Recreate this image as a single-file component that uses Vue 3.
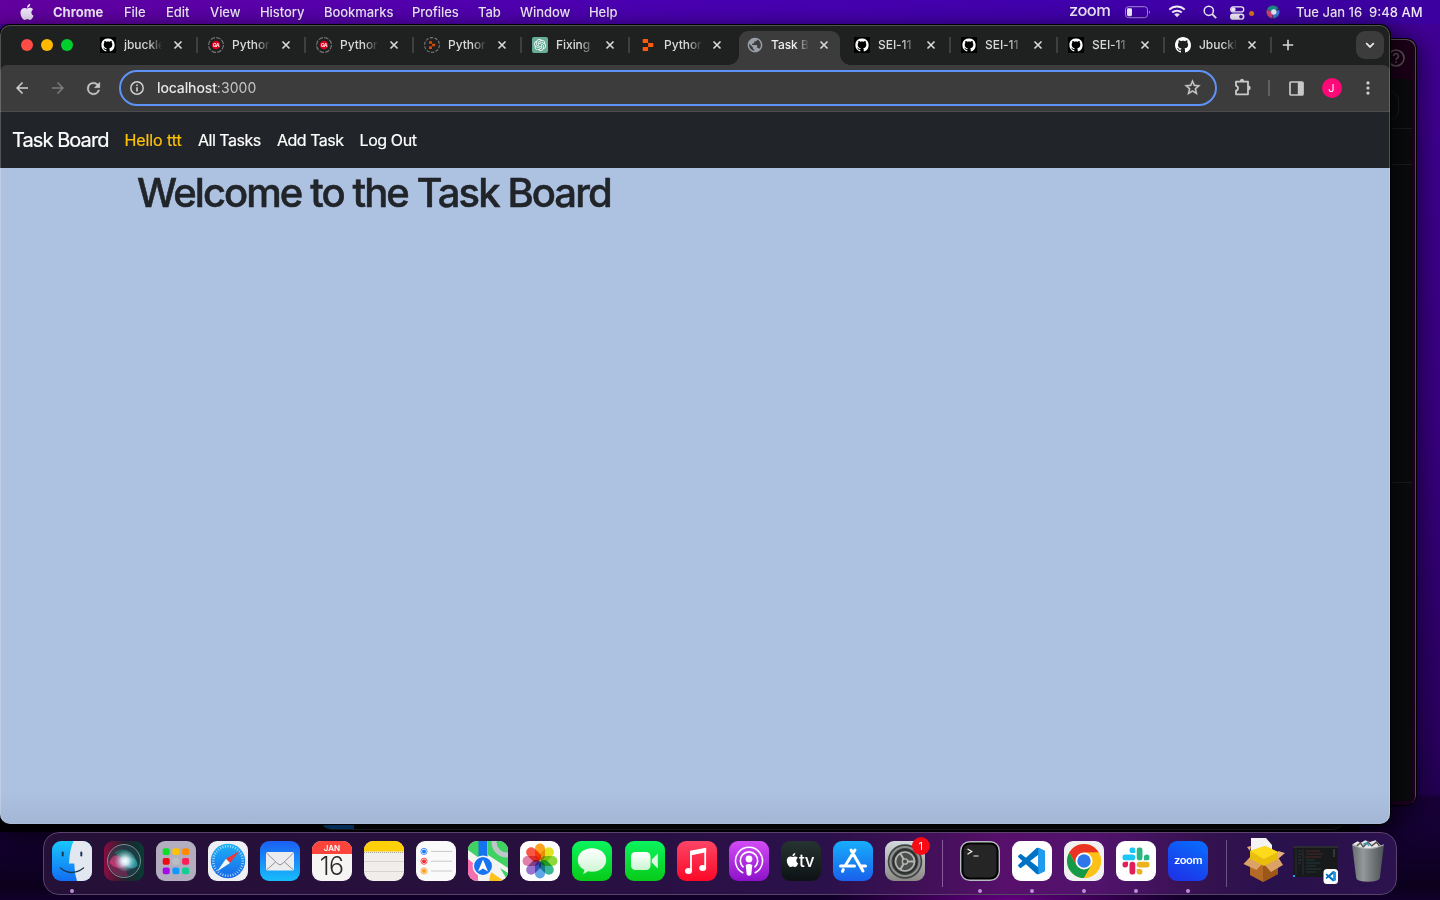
<script setup>
const menus = [
  ['File', 42], ['Edit', 44], ['View', 50], ['History', 64], ['Bookmarks', 88],
  ['Profiles', 66], ['Tab', 42], ['Window', 69], ['Help', 40],
]
const tabs = [
  { icon: 'ghbox', label: 'jbuckle' },
  { icon: 'ga', label: 'Python' },
  { icon: 'ga', label: 'Python' },
  { icon: 'replitring', label: 'Python' },
  { icon: 'gpt', label: 'Fixing' },
  { icon: 'replit', label: 'Python', bare: true },
  { icon: 'globe', label: 'Task B', active: true },
  { icon: 'ghbox', label: 'SEI-11', small: true },
  { icon: 'ghbox', label: 'SEI-11', small: true },
  { icon: 'ghbox', label: 'SEI-11', small: true },
  { icon: 'gh', label: 'Jbuckl', small: true },
]
const links = ['All Tasks', 'Add Task', 'Log Out']
const petals = ['#ff9500', '#dfe000', '#7ed321', '#1fae84', '#4a9be8', '#8a62c8', '#dd6fa0', '#f93e2c']
const pads = ['#0be029', '#ffc400', '#ff8a00', '#f00b12', '#b9bec4', '#ff1d55', '#a70bea', '#1299ff', '#10cf92']
const ticks = Array.from({ length: 36 }, (_, i) => i * 10)
</script>

<template>
  <div class="desktop">
    <svg width="0" height="0" class="defs">
      <symbol id="octocat" viewBox="0 0 16 16"><path d="M8 0C3.58 0 0 3.58 0 8c0 3.54 2.29 6.53 5.47 7.59.4.07.55-.17.55-.38 0-.19-.01-.82-.01-1.49-2.01.37-2.53-.49-2.69-.94-.09-.23-.48-.94-.82-1.13-.28-.15-.68-.52-.01-.53.63-.01 1.08.58 1.23.82.72 1.21 1.87.87 2.33.66.07-.52.28-.87.51-1.07-1.78-.2-3.64-.89-3.64-3.95 0-.87.31-1.59.82-2.15-.08-.2-.36-1.02.08-2.12 0 0 .67-.21 2.2.82.64-.18 1.32-.27 2-.27s1.36.09 2 .27c1.53-1.04 2.2-.82 2.2-.82.44 1.1.16 1.92.08 2.12.51.56.82 1.27.82 2.15 0 3.07-1.87 3.75-3.65 3.95.29.25.54.73.54 1.48 0 1.07-.01 1.93-.01 2.2 0 .21.15.46.55.38A8.01 8.01 0 0 0 16 8c0-4.42-3.58-8-8-8z" /></symbol>
      <symbol id="apple" viewBox="0 0 24 24"><path d="M12.152 6.896c-.948 0-2.415-1.078-3.96-1.04-2.04.027-3.91 1.183-4.961 3.014-2.117 3.675-.546 9.103 1.519 12.09 1.013 1.454 2.208 3.09 3.792 3.039 1.52-.065 2.09-.987 3.935-.987 1.831 0 2.35.987 3.96.948 1.637-.026 2.676-1.48 3.676-2.948 1.156-1.688 1.636-3.325 1.662-3.415-.039-.013-3.182-1.221-3.22-4.857-.026-3.04 2.48-4.494 2.597-4.559-1.429-2.09-3.623-2.324-4.39-2.376-2-.156-3.675 1.09-4.61 1.09zM15.53 3.83c.843-1.012 1.4-2.427 1.245-3.83-1.207.052-2.662.805-3.532 1.818-.78.896-1.454 2.338-1.273 3.714 1.338.104 2.715-.688 3.559-1.701" /></symbol>
      <symbol id="vscode" viewBox="0 0 24 24">
        <path fill="#0072c6" fill-rule="evenodd" d="M23.15 2.587L18.21.21a1.494 1.494 0 0 0-1.705.29l-9.46 8.63-4.12-3.128a.999.999 0 0 0-1.276.057L.327 7.261A1 1 0 0 0 .326 8.74L3.899 12 .326 15.26a1 1 0 0 0 .001 1.479L1.65 17.94a.999.999 0 0 0 1.276.057l4.12-3.128 9.46 8.63a1.492 1.492 0 0 0 1.704.29l4.942-2.377A1.5 1.5 0 0 0 24 20.06V3.939a1.5 1.5 0 0 0-.85-1.352zm-5.146 14.861L10.826 12l7.178-5.448v10.896z" />
        <path fill="#1f9cf0" d="M18 .15l5.15 2.437A1.5 1.5 0 0 1 24 3.94v16.12a1.5 1.5 0 0 1-.85 1.352L18 23.85z" />
      </symbol>
      <symbol id="cross" viewBox="0 0 10 10"><path d="M1.5 1.5l7 7M8.5 1.5l-7 7" fill="none" stroke="#dadada" stroke-width="1.6" /></symbol>
      <symbol id="siri" viewBox="0 0 14 14">
        <circle cx="7" cy="7" r="7" fill="#3b2a70" /><path d="M1 4a7 7 0 0 1 11-1L7 8z" fill="#1c8a8c" />
        <path d="M1 5a6 6 0 0 0 5 8l1-6z" fill="#d8407c" /><path d="M13 5a6 6 0 0 1-6 8V7z" fill="#3f78e0" />
        <circle cx="7.8" cy="7" r="2.7" fill="#f3fbff" opacity=".9" />
      </symbol>
    </svg>

    <header class="menubar">
      <svg class="mb-apple" width="16" height="16" fill="#efe6fa"><use href="#apple" /></svg>
      <b>Chrome</b>
      <span v-for="m in menus" :key="m[0]" :style="{ width: m[1] + 'px' }">{{ m[0] }}</span>
      <span class="mb-zoom">zoom</span>
      <svg class="mb-batt" width="26" height="13" viewBox="0 0 26 13"><rect x=".5" y=".7" width="22" height="11" rx="3" fill="none" stroke="#a58bd8" /><path d="M24 4.5q2 1.7 0 3.4z" fill="#a58bd8" /><rect x="2" y="2.2" width="5" height="8" rx="1.4" fill="#f4effc" /></svg>
      <svg class="mb-wifi" width="18" height="13" viewBox="0 0 18 13" fill="none" stroke="#f4effc" stroke-width="2"><path d="M1.3 4.6a11 11 0 0 1 15.4 0M4.2 7.6a7 7 0 0 1 9.6 0" /><path d="M9 12.3L6.2 9.5a4 4 0 0 1 5.6 0z" fill="#f4effc" stroke="none" /></svg>
      <svg class="mb-search" width="14" height="14" viewBox="0 0 14 14" fill="none" stroke="#f4effc" stroke-width="1.5"><circle cx="5.8" cy="5.8" r="4.6" /><path d="M9.2 9.2l4 4" stroke-width="1.9" /></svg>
      <svg class="mb-cc" width="26" height="14" viewBox="0 0 26 14"><rect x=".7" y=".9" width="13" height="5" rx="2.5" fill="none" stroke="#f4effc" stroke-width="1.3" /><circle cx="3.4" cy="3.4" r="2.2" fill="#f4effc" /><rect y="7.6" width="14.4" height="6.2" rx="3.1" fill="#f4effc" /><circle cx="11" cy="10.7" r="1.8" fill="#4300a4" /><circle cx="21.6" cy="7.6" r="2.5" fill="#db7512" /></svg>
      <svg class="mb-siri" width="14" height="14"><use href="#siri" /></svg>
      <span class="mb-date">Tue Jan 16&nbsp; 9:48 AM</span>
    </header>

    <aside class="backwin">
      <svg width="18" height="18" viewBox="0 0 18 18" class="help"><circle cx="9" cy="9" r="8" fill="none" stroke="#5d525b" stroke-width="1.6" /><path d="M6.6 7a2.4 2.4 0 1 1 3.4 2.2q-1 .5-1 1.8M9 12.2v1.7" fill="none" stroke="#5d525b" stroke-width="1.5" /></svg>
      <div class="pane"><div class="r1"></div><div class="r2"></div><div class="r3"></div></div>
    </aside>
    <div class="editor-edge"><i></i></div>

    <main class="window">
      <div class="tabbar">
        <div class="lights"><i class="red"></i><i class="yellow"></i><i class="green"></i></div>
        <div v-for="(t, i) in tabs" :key="i" class="tab" :class="{ active: t.active, small: t.small, bare: t.bare }">
          <svg class="fav" width="16" height="16" viewBox="0 0 16 16">
            <template v-if="t.icon === 'ghbox'"><rect width="16" height="16" fill="#000" /><use href="#octocat" x="1.2" y="1.2" width="13.6" height="13.6" fill="#fff" /></template>
            <use v-else-if="t.icon === 'gh'" href="#octocat" width="16" height="16" fill="#fff" />
            <template v-else-if="t.icon === 'ga'"><circle cx="8" cy="8" r="7.4" fill="none" stroke="#77797a" stroke-width="1.1" stroke-dasharray="4.6 1.2" /><circle cx="8" cy="8" r="4.3" fill="#d9001c" /><text x="8" y="10" text-anchor="middle" font-size="5" font-weight="800" letter-spacing="-.4" fill="#ffd6da" font-family="Inter, sans-serif">GA</text></template>
            <template v-else-if="t.icon === 'replitring'"><circle cx="8" cy="8" r="7.4" fill="none" stroke="#77797a" stroke-width="1.1" stroke-dasharray="3.2 1.45" /><path d="M5 4.3h3v2.5H5zM8 6.8h3.2v2.5H8zM5 9.3h3v2.6H5z" fill="#d34a08" /></template>
            <template v-else-if="t.icon === 'gpt'"><rect width="16" height="16" rx="2" fill="#68ad98" /><svg x="2" y="2" width="12" height="12" viewBox="0 0 24 24"><path fill="#fff" d="M22.2819 9.8211a5.9847 5.9847 0 0 0-.5157-4.9108 6.0462 6.0462 0 0 0-6.5098-2.9A6.0651 6.0651 0 0 0 4.9807 4.1818a5.9847 5.9847 0 0 0-3.9977 2.9 6.0462 6.0462 0 0 0 .7427 7.0966 5.98 5.98 0 0 0 .511 4.9107 6.051 6.051 0 0 0 6.5146 2.9001A5.9847 5.9847 0 0 0 13.2599 24a6.0557 6.0557 0 0 0 5.7718-4.2058 5.9894 5.9894 0 0 0 3.9977-2.9001 6.0557 6.0557 0 0 0-.7475-7.0729zm-9.022 12.6081a4.4755 4.4755 0 0 1-2.8764-1.0408l.1419-.0804 4.7783-2.7582a.7948.7948 0 0 0 .3927-.6813v-6.7369l2.02 1.1686a.071.071 0 0 1 .038.052v5.5826a4.504 4.504 0 0 1-4.4945 4.4944zm-9.6607-4.1254a4.4708 4.4708 0 0 1-.5346-3.0137l.142.0852 4.783 2.7582a.7712.7712 0 0 0 .7806 0l5.8428-3.3685v2.3324a.0804.0804 0 0 1-.0332.0615L9.74 19.9502a4.4992 4.4992 0 0 1-6.1408-1.6464zM2.3408 7.8956a4.485 4.485 0 0 1 2.3655-1.9728V11.6a.7664.7664 0 0 0 .3879.6765l5.8144 3.3543-2.0201 1.1685a.0757.0757 0 0 1-.071 0l-4.8303-2.7865A4.504 4.504 0 0 1 2.3408 7.872zm16.5963 3.8558L13.1038 8.364 15.1192 7.2a.0757.0757 0 0 1 .071 0l4.8303 2.7913a4.4944 4.4944 0 0 1-.6765 8.1042v-5.6772a.79.79 0 0 0-.407-.667zm2.0107-3.0231l-.142-.0852-4.7735-2.7818a.7759.7759 0 0 0-.7854 0L9.409 9.2297V6.8974a.0662.0662 0 0 1 .0284-.0615l4.8303-2.7866a4.4992 4.4992 0 0 1 6.6802 4.66zM8.3065 12.863l-2.02-1.1638a.0804.0804 0 0 1-.038-.0567V6.0742a4.4992 4.4992 0 0 1 7.3757-3.4537l-.142.0805L8.704 5.459a.7948.7948 0 0 0-.3927.6813zm1.0976-2.3654l2.602-1.4998 2.6069 1.4998v2.9994l-2.5974 1.4997-2.6067-1.4997Z" /></svg></template>
            <path v-else-if="t.icon === 'replit'" d="M3.4 2h4a.7.7 0 0 1 .7.7v3.2H3.4a.7.7 0 0 1-.7-.7V2.7a.7.7 0 0 1 .7-.7zM8.1 5.9h4.5a.7.7 0 0 1 .7.7v2.6a.7.7 0 0 1-.7.7H8.1zM3.4 9.9h4.7v3.3a.7.7 0 0 1-.7.7h-4a.7.7 0 0 1-.7-.7v-2.6a.7.7 0 0 1 .7-.7z" fill="#ff5a0a" />
            <svg v-else x="-.8" y="-.8" width="17.6" height="17.6" viewBox="0 0 24 24"><path fill="#9aa0a9" d="M12 2C6.48 2 2 6.48 2 12s4.48 10 10 10 10-4.48 10-10S17.52 2 12 2zm-1 17.93c-3.95-.49-7-3.85-7-7.93 0-.62.08-1.21.21-1.79L9 15v1c0 1.1.9 2 2 2v1.93zm6.9-2.54c-.26-.81-1-1.39-1.9-1.39h-1v-3c0-.55-.45-1-1-1H8v-2h2c.55 0 1-.45 1-1V7h2c1.1 0 2-.9 2-2v-.41c2.93 1.19 5 4.06 5 7.41 0 2.08-.8 3.97-2.1 5.39z" /></svg>
          </svg>
          <span class="label">{{ t.label }}</span>
          <svg class="x" width="10" height="10"><use href="#cross" /></svg>
        </div>
        <svg class="plus" width="12" height="12" viewBox="0 0 12 12"><path d="M6 .8v10.4M.8 6h10.4" stroke="#d8d8d8" stroke-width="1.6" /></svg>
        <div class="chev"><svg width="10" height="7" viewBox="0 0 10 7"><path d="M1.2 1.2L5 5l3.8-3.8" fill="none" stroke="#e6e6e6" stroke-width="1.8" /></svg></div>
      </div>

      <div class="toolbar">
        <svg width="18" height="18" viewBox="0 0 24 24" fill="#d2d2d2" class="back"><path d="M20 11H7.83l5.59-5.59L12 4l-8 8 8 8 1.41-1.41L7.83 13H20v-2z" /></svg>
        <svg width="18" height="18" viewBox="0 0 24 24" fill="#7c7c7c" class="fwd"><path d="M12 4l-1.41 1.41L16.17 11H4v2h12.17l-5.58 5.59L12 20l8-8z" /></svg>
        <svg width="19" height="19" viewBox="0 0 24 24" fill="#cacaca" class="reload"><path stroke="#cacaca" stroke-width=".5" d="M17.65 6.35A7.958 7.958 0 0 0 12 4a8 8 0 1 0 7.73 10h-2.08A6 6 0 1 1 12 6c1.66 0 3.14.69 4.22 1.78L13 11h7V4l-2.35 2.35z" /></svg>
        <div class="address">
          <svg width="14" height="14" viewBox="0 0 14 14"><circle cx="7" cy="7" r="6.2" fill="none" stroke="#d0d0d0" stroke-width="1.5" /><path d="M7 6.2v4.2M7 3.4v1.6" stroke="#d0d0d0" stroke-width="1.6" /></svg>
          <span class="url">localhost<em>:3000</em></span>
          <svg class="star" width="19" height="19" viewBox="0 0 24 24" fill="#c8c8c8"><path stroke="#c8c8c8" stroke-width=".4" d="M22 9.24l-7.19-.62L12 2 9.19 8.63 2 9.24l5.46 4.73L5.82 21 12 17.27 18.18 21l-1.63-7.03L22 9.24zM12 15.4l-3.76 2.27 1-4.28-3.32-2.88 4.38-.38L12 6.1l1.71 4.04 4.38.38-3.32 2.88 1 4.28L12 15.4z" /></svg>
        </div>
        <svg class="puzzle" width="18" height="18" viewBox="0 0 18 18"><path d="M2 3.6h12v12.7H2v-3.7c2.7-.5 2.7-4.3 0-4.8z" fill="none" stroke="#c9c9c9" stroke-width="1.8" stroke-linejoin="round" /><path d="M5.8 3.3a2.2 2.5 0 0 1 4.4 0zM14.2 7.6a2.4 2.2 0 0 1 0 4.6z" fill="#c9c9c9" /></svg>
        <i class="tdiv"></i>
        <svg class="panel" width="15" height="15" viewBox="0 0 15 15"><rect x="1" y="1" width="13" height="13" rx="1" fill="none" stroke="#c9c9c9" stroke-width="1.7" /><path d="M8.8 1H14v13H8.8z" fill="#c9c9c9" /></svg>
        <span class="avatar">J</span>
        <svg width="4" height="14" viewBox="0 0 4 14" fill="#d2d2d2"><circle cx="2" cy="1.9" r="1.6" /><circle cx="2" cy="7" r="1.6" /><circle cx="2" cy="12.1" r="1.6" /></svg>
      </div>

      <nav class="navbar">
        <span class="brand">Task Board</span>
        <span class="hello">Hello ttt</span>
        <a v-for="l in links" :key="l">{{ l }}</a>
      </nav>
      <section class="page"><h1>Welcome to the Task Board</h1></section>
    </main>

    <footer class="dock">
      <div class="app run">
        <svg width="40" height="40" viewBox="0 0 40 40">
          <defs><linearGradient id="fi" x2="0" y2="1"><stop stop-color="#18c7fc" /><stop offset="1" stop-color="#116ef4" /></linearGradient><clipPath id="rc"><rect width="40" height="40" rx="9" /></clipPath></defs>
          <g clip-path="url(#rc)"><rect width="40" height="40" fill="url(#fi)" /><path d="M21.5 0Q17.5 9 17 22.5h5.3Q22.300 32 25 40h15V0z" fill="#e3e8f0" /></g>
          <path d="M10.700 11.500v3M29.300 11.500v3" stroke="#1c3450" stroke-width="2" stroke-linecap="round" /><path d="M8.500 27q11 9 23 0" fill="none" stroke="#20364f" stroke-width="1.400" stroke-linecap="round" />
        </svg>
      </div>
      <div class="app">
        <svg width="40" height="40" viewBox="0 0 40 40"><defs><linearGradient id="si"><stop stop-color="#8a0c40" /><stop offset=".5" stop-color="#24202e" /><stop offset="1" stop-color="#073c34" /></linearGradient><radialGradient id="glow"><stop stop-color="#fff" /><stop offset=".35" stop-color="#e3f5ff" stop-opacity=".85" /><stop offset="1" stop-color="#8cc8e0" stop-opacity="0" /></radialGradient></defs>
          <rect width="40" height="40" rx="9" fill="url(#si)" /><circle cx="20" cy="20" r="16.500" fill="#244f5a" fill-opacity=".45" stroke="#8f9fa5" stroke-width=".8" /><path d="M4 20a16 16 0 0 0 20 15l-4-14z" fill="#a81f5e" opacity=".45" /><path d="M6 20c3-8 9-7 14-1s-3 10-9 7-6-6-5-6z" fill="#e0407c" opacity=".65" /><path d="M18 20c6-6 14-4 15 2s-8 9-15-2z" fill="#37b6cb" opacity=".65" /><path d="M10 12C20 3 33 12 34 26L22 20z" fill="#1ca884" opacity=".4" /><circle cx="21" cy="20" r="11" fill="url(#glow)" /></svg>
      </div>
      <div class="app">
        <svg width="40" height="40" viewBox="0 0 40 40"><rect width="40" height="40" rx="9" fill="#b3aebf" /><rect v-for="(c, i) in pads" :key="i" :x="6.7 + (i % 3) * 9.7" :y="7.3 + Math.floor(i / 3) * 9.6" width="7" height="6.800" rx="1.800" :fill="c" /></svg>
      </div>
      <div class="app">
        <svg width="40" height="40" viewBox="0 0 40 40"><defs><linearGradient id="sa" x2="0" y2="1"><stop stop-color="#1cb2f8" /><stop offset="1" stop-color="#1768e8" /></linearGradient></defs><rect width="40" height="40" rx="9" fill="#eff0f3" /><circle cx="20" cy="20" r="17.200" fill="url(#sa)" /><path v-for="a in ticks" :key="a" d="M20 4v2.400" stroke="#e7f7ff" stroke-width=".7" :transform="`rotate(${a} 20 20)`" /><path d="M31.500 10L18 17.800l4 4.200z" fill="#f0353a" /><path d="M9 30.500L18 17.800l4 4.200z" fill="#f6f6f6" /></svg>
      </div>
      <div class="app">
        <svg width="40" height="40" viewBox="0 0 40 40"><defs><linearGradient id="ma" x2="0" y2="1"><stop stop-color="#1b5ff3" /><stop offset="1" stop-color="#18bdfc" /></linearGradient></defs><rect width="40" height="40" rx="9" fill="url(#ma)" /><rect x="6" y="11" width="28" height="18.500" rx="1.500" fill="#ececef" /><path d="M6.500 12L18 23q2 1.800 4 0l11.500-11M6.500 29l9-8M33.500 29l-9-8" fill="none" stroke="#8f949c" stroke-width="1" /></svg>
      </div>
      <div class="app">
        <svg width="40" height="40" viewBox="0 0 40 40"><g clip-path="url(#rc)"><rect width="40" height="40" fill="#f7f5f4" /><rect width="40" height="13" fill="#fb453c" /></g><text x="20" y="9.800" text-anchor="middle" font-size="8" font-weight="600" fill="#fff" font-family="Inter, sans-serif">JAN</text><text x="19.500" y="33.500" text-anchor="middle" font-size="25" font-weight="300" letter-spacing="-.6" fill="#29292b" font-family="Inter, sans-serif">16</text></svg>
      </div>
      <div class="app">
        <svg width="40" height="40" viewBox="0 0 40 40"><g clip-path="url(#rc)"><rect width="40" height="40" fill="#f0edea" /><rect width="40" height="10.500" fill="#ffcf08" /><path d="M0 11.500h40" stroke="#aaa59e" stroke-dasharray="1 1" /><path d="M0 20.500h40M0 30.500h40" stroke="#d0ccc7" stroke-width=".8" /></g></svg>
      </div>
      <div class="app">
        <svg width="40" height="40" viewBox="0 0 40 40"><rect width="40" height="40" rx="9" fill="#fbfafb" /><path d="M15 10.400h21M15 20.200h21M15 30h21" stroke="#c9c9cc" stroke-width="1" /><g v-for="(c, i) in ['#1a7af8', '#fb2b2e', '#fb9a1b']" :key="c"><circle cx="8" :cy="10.4 + i * 9.8" r="3.100" fill="none" :stroke="c" stroke-width=".8" /><circle cx="8" :cy="10.4 + i * 9.8" r="2" :fill="c" /></g></svg>
      </div>
      <div class="app">
        <svg width="40" height="40" viewBox="0 0 40 40"><g clip-path="url(#rc)"><rect width="40" height="40" fill="#f3f3f1" /><path d="M0 3l7-3h4v17L0 9z" fill="#3fd161" /><path d="M20 0h20v27L20 14z" fill="#3fd161" /><circle cx="39" cy="1" r="13" fill="none" stroke="#bfc6c9" stroke-width="5" /><path d="M0 18l10 8v14H0z" fill="#f56fae" /><path d="M23 31l13 9H21z" fill="#fcc21b" /><path d="M32 27l8 5v8z" fill="#3fd161" /><path d="M10.500 0h9v20h-9z" fill="#1673ee" /></g><circle cx="15" cy="25" r="9.700" fill="#1673f2" stroke="#f4f4f4" stroke-width="1.500" /><path d="M15 18.500l5 12-5-3-5 3z" fill="#fff" /></svg>
      </div>
      <div class="app">
        <svg width="40" height="40" viewBox="0 0 40 40"><rect width="40" height="40" rx="9" fill="#fff" /><g><rect v-for="(c, i) in petals" :key="c" class="petal" x="15" y="2.500" width="10" height="17" rx="5" :fill="c" opacity=".88" :transform="`rotate(${i * 45} 20 20)`" /></g></svg>
      </div>
      <div class="app">
        <svg width="40" height="40" viewBox="0 0 40 40"><defs><linearGradient id="gr" x2="0" y2="1"><stop stop-color="#0bf45f" /><stop offset="1" stop-color="#08ca18" /></linearGradient><linearGradient id="wh" x2="0" y2="1"><stop stop-color="#fff" /><stop offset="1" stop-color="#caf5d0" /></linearGradient></defs><rect width="40" height="40" rx="9" fill="url(#gr)" /><path d="M20 7.300c8 0 14.200 5 14.200 11.700S28 30.800 20 30.800c-1.500 0-3-.2-4.300-.5-1.500 1.700-3 2.300-4.800 2.400 1-1.200 1.500-2.400 1.400-3.900C8.300 26.700 5.800 23.200 5.800 19c0-6.700 6.200-11.700 14.200-11.700z" fill="url(#wh)" /></svg>
      </div>
      <div class="app">
        <svg width="40" height="40" viewBox="0 0 40 40"><rect width="40" height="40" rx="9" fill="url(#gr)" /><rect x="6" y="11" width="19.500" height="18" rx="4.500" fill="url(#wh)" /><path d="M26.800 18.500l6-6v15l-6-6z" fill="#dff8e3" /></svg>
      </div>
      <div class="app">
        <svg width="40" height="40" viewBox="0 0 40 40"><defs><linearGradient id="mu" x2="0" y2="1"><stop stop-color="#fc4566" /><stop offset="1" stop-color="#fb0926" /></linearGradient></defs><rect width="40" height="40" rx="9" fill="url(#mu)" /><path d="M14 30V10.200M28.200 7v20" fill="none" stroke="#fff" stroke-width="1.800" /><path d="M13.100 9.700L29.100 6.700v4.500L13.100 14.500z" fill="#fff" /><ellipse cx="11.500" cy="30" rx="3.500" ry="3" fill="#fff" /><ellipse cx="25.700" cy="27" rx="3.500" ry="3" fill="#fff" /></svg>
      </div>
      <div class="app">
        <svg width="40" height="40" viewBox="0 0 40 40"><defs><linearGradient id="po" x2="0" y2="1"><stop stop-color="#d34cf6" /><stop offset="1" stop-color="#8c12c8" /></linearGradient></defs><rect width="40" height="40" rx="9" fill="url(#po)" /><g fill="none" stroke="#fff" stroke-width="1.600"><path d="M14.300 32a13.500 13.500 0 1 1 11.400 0" /><path d="M14.500 26.300a8.700 8.700 0 1 1 11 0" /></g><circle cx="20" cy="18" r="3.400" fill="#fff" /><path d="M16.700 24q3.300-2 6.600 0l-1 9.500q-2.300 2.500-4.600 0z" fill="#fff" /></svg>
      </div>
      <div class="app">
        <svg width="40" height="40" viewBox="0 0 40 40"><defs><linearGradient id="tv" x2="0" y2="1"><stop stop-color="#263431" /><stop offset="1" stop-color="#0d1214" /></linearGradient></defs><rect width="40" height="40" rx="9" fill="url(#tv)" /><use href="#apple" x="4.500" y="12" width="14" height="14" fill="#fff" /><text x="18" y="26" font-size="17" font-weight="500" letter-spacing="-.3" fill="#fff" font-family="Inter, sans-serif">tv</text></svg>
      </div>
      <div class="app">
        <svg width="40" height="40" viewBox="0 0 40 40"><defs><linearGradient id="as" x2="0" y2="1"><stop stop-color="#16aefc" /><stop offset="1" stop-color="#1a60eb" /></linearGradient></defs><rect width="40" height="40" rx="9" fill="url(#as)" /><path d="M22 9L12.300 24.500M10.300 28.500l-.8 1.800M18 9l12 21M7.500 25h14M27.500 25h5" fill="none" stroke="#fff" stroke-width="3" stroke-linecap="round" /></svg>
      </div>
      <div class="app">
        <svg width="40" height="40" viewBox="0 0 40 40"><defs><linearGradient id="se" x2="0" y2="1"><stop stop-color="#d2dadd" /><stop offset="1" stop-color="#8b8986" /></linearGradient></defs><rect width="40" height="40" rx="9" fill="url(#se)" /><circle cx="20" cy="20.500" r="17.300" fill="#3f4341" /><circle cx="20" cy="20.500" r="14.500" fill="none" stroke="#8f918f" stroke-width="2.200" /><circle cx="20" cy="20.500" r="11.500" fill="#555957" stroke="#2b2e2c" stroke-width="1.500" /><circle cx="20" cy="20.500" r="9.500" fill="#4c4f4e" stroke="#b3b5b2" stroke-width="1.700" /><path d="M20 20.500h10M20 20.500l-5-8.600M20 20.500l-5 8.600" stroke="#b3b5b2" stroke-width="2" /><circle cx="20" cy="20.500" r="2.700" fill="#464a48" stroke="#b9bbb8" stroke-width="1.300" /></svg>
        <span class="badge">1</span>
      </div>
      <i class="sep"></i>
      <div class="app run">
        <svg width="40" height="40" viewBox="0 0 40 40"><rect x=".7" y=".7" width="38.600" height="38.600" rx="9" fill="#000" stroke="#b4bbc1" stroke-width="1.400" /><rect x="3.500" y="3.500" width="33" height="33" rx="6" fill="#252525" /><path d="M7.500 8l4.300 2.600-4.300 2.600M13.500 15h5" fill="none" stroke="#f2f2f2" stroke-width="1.200" /></svg>
      </div>
      <div class="app run"><svg width="40" height="40" viewBox="0 0 40 40"><rect width="40" height="40" rx="9" fill="#fff" /><use href="#vscode" x="6" y="6.500" width="27" height="27" /></svg></div>
      <div class="app run">
        <svg width="40" height="40" viewBox="0 0 40 40"><rect width="40" height="40" rx="9" fill="#f1f1f3" /><circle cx="20" cy="20" r="17" fill="#fbc116" /><path d="M5.280 11.500A17 17 0 0 1 34.720 11.500L20 12 12.640 24.250z" fill="#ea3323" /><path d="M5.280 11.500L12.640 24.250 20 28.500 27.360 24.250 20 37A17 17 0 0 1 5.280 11.500z" fill="#159a48" /><path d="M34.720 11.500A17 17 0 0 1 20 37l7.360-12.750L20 11.500z" fill="#fbc116" /><circle cx="20" cy="20" r="8.500" fill="#fff" /><circle cx="20" cy="20" r="6.700" fill="#2c78ea" /></svg>
      </div>
      <div class="app run">
        <svg width="40" height="40" viewBox="0 0 40 40"><rect width="40" height="40" rx="9" fill="#fff" /><svg x="6.300" y="6.300" width="27.400" height="27.400" viewBox="0 0 24 24"><g v-for="(c, i) in ['#e01e5a', '#1bc8f5', '#2bb67d', '#ecb21e']" :key="c" :fill="c" :transform="`rotate(${i * 90} 12 12)`"><path d="M5.042 15.165a2.528 2.528 0 0 1-2.52 2.523A2.528 2.528 0 0 1 0 15.165a2.527 2.527 0 0 1 2.522-2.52h2.52v2.52zM6.313 15.165a2.527 2.527 0 0 1 2.521-2.52 2.527 2.527 0 0 1 2.521 2.52v6.313A2.528 2.528 0 0 1 8.834 24a2.528 2.528 0 0 1-2.521-2.522v-6.313z" /></g></svg></svg>
      </div>
      <div class="app run">
        <svg width="40" height="40" viewBox="0 0 40 40"><defs><linearGradient id="zo" x1="1" x2=".5" y2="1"><stop stop-color="#0870ff" /><stop offset="1" stop-color="#1b38e8" /></linearGradient></defs><rect width="40" height="40" rx="9" fill="url(#zo)" /><text transform="translate(20 23) scale(1.12 1)" text-anchor="middle" font-size="10" font-weight="600" letter-spacing="-.4" fill="#fff" font-family="Inter, sans-serif">zoom</text></svg>
      </div>
      <i class="sep two"></i>
      <svg class="box" width="42" height="46" viewBox="0 0 42 46"><path d="M8 1h15l6 7v18H8z" fill="#f4f3f1" /><path d="M7 20l15 7 13-6v16l-15 8-13-7z" fill="#b66a28" /><path d="M20 28v17l15-8V20z" fill="#9d5718" /><path d="M7 20L.5 27l13 6 6.500-7zM20 26l8 9 12-7-5-8z" fill="#dba266" /><path d="M7 14l-3-4 4-1zM35 14l7 2-7 6z" fill="#e6b079" /><path d="M7 14l15-5 13 6v7l-14 7-14-7z" fill="#e9bd0c" /><path d="M7 14l15-5 13 6-14 7z" fill="#fddb1c" /></svg>
      <svg class="thumb" width="46" height="40" viewBox="0 0 46 40"><rect width="45" height="31" fill="#17191b" /><path d="M0 0h45v2H0z" fill="#2b2c30" /><path d="M3 3v25M10 3v26" stroke="#2b2f34" /><path d="M5 5h3M5 8h4M5 11h3M5 14h4M5 17h3" stroke="#3b4148" stroke-width=".7" /><path d="M13 5h14M13 8h17M12 11h16" stroke="#55302a" stroke-width=".8" /><path d="M13 14h9M13 17h14M13 20h10M13 23h15M13 26h10" stroke="#234842" stroke-width=".7" /><path d="M41 3v8" stroke="#30363c" stroke-width="2" /><path d="M0 30h2" stroke="#18a3eb" stroke-width="2" /><rect x="30.500" y="23" width="14.500" height="15" rx="3.500" fill="#fff" /><use href="#vscode" x="32.500" y="25" width="10.500" height="10.500" /></svg>
      <svg class="trash" width="34" height="44" viewBox="0 0 36 46"><defs><linearGradient id="tr"><stop stop-color="#656b6e" /><stop offset=".35" stop-color="#94989a" /><stop offset=".7" stop-color="#6c7174" /><stop offset="1" stop-color="#4b5054" /></linearGradient></defs><path d="M2 5l5-3 3 2 5-3 5 2 6-2 5 5 3 3-5 3H4z" fill="#e7e7e7" /><path d="M6 7l4-3 3 4 5-5 4 4 5-4 4 5" fill="none" stroke="#54514e" stroke-width="1.500" /><path d="M13 5l4-1 2 3" fill="none" stroke="#2e9cc1" stroke-width="1.500" /><path d="M1 5q17 9 34 0l-4.500 36q-1 4-12.500 4T5.500 41z" fill="url(#tr)" /><path d="M1.500 6q16.500 8 33 0" fill="none" stroke="#b7babb" stroke-width="1" /></svg>
    </footer>
  </div>
</template>

<style>
html, body { margin: 0; overflow: hidden; }
</style>

<style scoped>
* { box-sizing: border-box; }
i, em { font-style: normal; }
svg { display: block; flex: none; }
.defs { position: absolute; }
.desktop { position: relative; width: 1440px; height: 900px; overflow: hidden; font-family: Inter, "Liberation Sans", sans-serif; background: radial-gradient(ellipse 180px 22px at 1010px 900px, #650080, transparent), linear-gradient(180deg, #420097 0, #3a0083 45%, #2a0060 82%, #230052 794px, #190039 797px, #160034 830px, #0b001c 888px, #11002c 900px); }
.menubar { height: 24px; display: flex; align-items: center; padding: 0 0 1px 19px; font-size: 13px; font-weight: 500; color: #f1eafb; white-space: nowrap; background: linear-gradient(90deg, #63009f 0, #5700ad 22%, #4a00b2 45%, #4100ac 75%, #3c00a0 100%); }
.menubar span { letter-spacing: -.06px; flex: none; text-shadow: 0 1px 2px #2c006b66; }
.menubar b { width: 71px; margin-left: 18px; font-weight: 700; }
.menubar .mb-zoom { font-size: 16.5px; font-weight: 500; letter-spacing: -.55px; line-height: 20px; width: 42px; margin: -3px 0 0 auto; }
.mb-batt { margin: 1px 0 0 14px; }
.mb-wifi { margin-left: 17px; }
.mb-search { margin-left: 17px; }
.mb-cc { margin: 3px 0 0 13px; }
.mb-siri { margin: 1px 0 0 10px; }
.menubar .mb-date { width: 127px; margin: 0 17px 0 16px; letter-spacing: 0; }

.window { position: absolute; left: 0; top: 25px; width: 1390px; height: 799px; border-radius: 10px; overflow: hidden; background: #1f2120; box-shadow: 0 0 0 1px #000, 0 8px 24px 4px #000000b0; display: flex; flex-direction: column; }
.window::after { content: ""; position: absolute; inset: 0; border: 1px solid #ffffff38; border-bottom-color: #ffffff18; border-radius: 10px; pointer-events: none; }
.tabbar { height: 40px; flex: none; display: flex; align-items: center; background: #1f2120; }
.lights { width: 91px; padding-left: 21px; display: flex; gap: 8px; flex: none; }
.lights i { width: 12px; height: 12px; border-radius: 50%; }
.red { background: #ff4d46; } .yellow { background: #ffb900; } .green { background: #00cf2e; }
.tab { position: relative; width: 108px; height: 40px; flex: none; display: flex; align-items: center; padding-left: 9px; color: #d8dad9; font-size: 12px; }
.tab.small { width: 107px; }
.label { width: 42px; margin: -1px -3px 0 8px; white-space: nowrap; letter-spacing: -.05px; font-weight: 500; -webkit-mask-image: linear-gradient(90deg, #000 58%, transparent 91%); mask-image: linear-gradient(90deg, #000 58%, transparent 91%); }
.x { margin-left: 10px; }
.small .x { margin-left: 9px; }
.bare .x { margin-left: 9px; }
.tab:not(.active):not(.bare)::after { content: ""; position: absolute; right: 1px; top: 12px; width: 2px; height: 16px; background: #3e403f; }
.tab.active { width: 106px; padding-left: 8px; color: #eee; }
.tab.active::before { content: ""; position: absolute; left: 0; top: 6px; width: 101px; height: 34px; border-radius: 9px 9px 0 0; background: #3c3c3c; }
.tab.active::after { content: ""; position: absolute; left: -10px; bottom: 0; width: 121px; height: 10px; background: radial-gradient(circle at 0 0, transparent 9.5px, #3c3c3c 10px) left / 10px 10px no-repeat, radial-gradient(circle at 100% 0, transparent 9.5px, #3c3c3c 10px) right / 10px 10px no-repeat; }
.tab.active > * { position: relative; z-index: 1; }
.tab.active .x { margin-left: 9px; }
.plus { margin-left: 9px; }
.chev { width: 28px; height: 28px; border-radius: 9px; margin: 0 6px 0 auto; background: #3c3c3c; display: flex; align-items: center; justify-content: center; }
.toolbar { height: 47px; flex: none; display: flex; align-items: center; padding-left: 13px; background: #3c3c3c; border-radius: 7px 7px 0 0; border-bottom: 1px solid #4c4c4c; }
.fwd { margin: 0 18px; }
.reload { margin: 0 1px 0 -1px; }
.address { width: 1098px; height: 36px; margin-left: 15px; flex: none; border: 2px solid #5c93f5; border-radius: 18px; display: flex; align-items: center; padding: 0 13px 0 9px; font-size: 14px; color: #e6e6e6; }
.url { margin: -1px 0 0 13px; letter-spacing: -.12px; font-weight: 500; }
.url em { color: #c5c5c5; font-weight: 400; letter-spacing: .1px; }
.star { margin: -1px 0 0 auto; }
.puzzle { margin: -2px 0 0 17px; }
.tdiv { width: 2px; height: 16px; margin-left: 16px; background: #606060; }
.panel { margin-left: 19px; margin-right: 18px; }
.panel { margin-left: 18.5px; }
.avatar { width: 20px; height: 20px; margin-right: 24px; border-radius: 50%; background: #ff0878; color: #fff; font-size: 11px; line-height: 20px; text-align: center; }
.navbar { height: 56px; flex: none; display: flex; align-items: center; padding-left: 12px; background: #212529; color: #fff; font-size: 16px; white-space: nowrap; }
.brand { width: 112.5px; font-size: 20px; letter-spacing: -.93px; -webkit-text-stroke: .2px; }
.hello { width: 73.5px; color: #ffc107; letter-spacing: -.1px; -webkit-text-stroke: .2px; }
.navbar a { letter-spacing: -.5px; -webkit-text-stroke: .2px; }
.navbar a:nth-of-type(1) { width: 79px; }
.navbar a:nth-of-type(2) { width: 82.5px; }
.navbar a:nth-of-type(3) { letter-spacing: -.4px; }
.page { flex: 1; background: linear-gradient(180deg, #adc1e1 0, #adc1e1 95%, #a3b6d6 100%); padding: 1px 0 0 137px; }
h1 { margin: 0; font-size: 40px; line-height: 48px; font-weight: 500; color: #212529; letter-spacing: -1.93px; white-space: nowrap; -webkit-text-stroke: .5px; }

.backwin { position: absolute; left: 1340px; top: 38px; width: 77px; height: 768px; border: 1px solid #000; border-radius: 10px; background: linear-gradient(#1c0018, #1c0020); box-shadow: inset -1px 1px #5b4b59, 0 8px 22px 6px #0c002099; }
.help { position: absolute; left: 46px; top: 10px; }
.pane { position: absolute; left: 10px; right: 4px; top: 40px; bottom: 4px; background: #090b0d; border-radius: 4px; }
.r1 { height: 50px; border-bottom: 1px solid #191c1e; }
.r2 { height: 36px; border-bottom: 1px solid #191c1e; }
.r3 { height: 318px; border-bottom: 1px solid #191c1e; }
.r1::after { content: ""; position: absolute; right: 13px; top: 12px; width: 30px; height: 27px; border: 1px solid #1b1e20; border-radius: 9px; }
.editor-edge { position: absolute; left: 321px; top: 800px; width: 1022px; height: 30px; border-radius: 10px; overflow: hidden; background: #08090a; border-bottom: 1px solid #2b2b2d; }
.editor-edge i { display: block; width: 33px; height: 30px; background: #0060b9; }
.desktop::before { content: ""; position: absolute; left: 0; top: 806px; width: 1360px; height: 26px; background: linear-gradient(#020005, #050009); }

.dock { position: absolute; left: 43px; top: 832px; width: 1354px; height: 63px; border-radius: 16px; border: 1px solid #5a426c; display: flex; padding: 8px 0 0 8px; background: linear-gradient(90deg, #251037 0, #28103e 35%, #2b114b 58%, #3d1054 64%, #57106b 71%, #51136c 78%, #34124f 86%, #29114b 91%, #2c124e 100%); }
.app { position: relative; width: 40px; height: 54px; margin-right: 12.05px; flex: none; }
.run::after { content: ""; position: absolute; left: 18px; top: 48px; width: 4px; height: 4px; border-radius: 50%; background: #bd8ed9; }
.badge { position: absolute; left: 27px; top: -4px; width: 18px; height: 18px; border-radius: 50%; background: #f80b14; color: #fff; font-size: 11px; line-height: 18px; text-align: center; }
.sep { width: 1px; height: 47px; margin: -1px 17.5px 0 5px; flex: none; background: #8a5999; }
.sep.two { margin: -1px 16px 0 5.5px; background: #6a5280; }
.petal { mix-blend-mode: multiply; }
.box { margin-top: -4px; }
.thumb { margin: 5px 0 0 8px; }
.trash { margin: -2px 0 0 12px; }
</style>
